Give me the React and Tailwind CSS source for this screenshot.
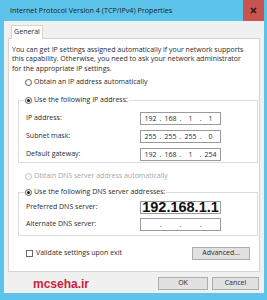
import React from "react";

function Radio({ checked, disabled }) {
  return (
    <span
      className={
        disabled
          ? "w-[7px] h-[7px] rounded-full border border-[#c4c4c4] bg-white flex items-center justify-center shrink-0"
          : "w-[7px] h-[7px] rounded-full border border-[#5e5e5e] bg-white flex items-center justify-center shrink-0"
      }
    >
      {checked && <span className="w-[3px] h-[3px] rounded-full bg-[#1a1a1a]" />}
    </span>
  );
}

function IpBox({ parts }) {
  return (
    <div className="w-[81px] h-[13px] border border-[#9a9a9a] bg-white flex items-center pl-[1px]">
      {parts.map((p, i) => (
        <React.Fragment key={i}>
          <span className="w-[17px] text-center leading-none">{p}</span>
          {i < 3 && <span className="w-[3px] text-center leading-none">.</span>}
        </React.Fragment>
      ))}
    </div>
  );
}

function Row({ label, children }) {
  return (
    <div className="flex items-center h-[13px] pl-[7px]">
      <span className="w-[114px] shrink-0">{label}</span>
      {children}
    </div>
  );
}

export default function App() {
  return (
    <div className="w-[267px] h-[300px] bg-[#5cc3ea] flex flex-col pl-[4px] pr-[3px] pb-[7px] font-['Open_Sans',sans-serif] text-[7px] text-[#2b2b2b]">
      {/* title bar */}
      <div className="h-[21px] flex items-center shrink-0">
        <span className="pl-[6px] flex-1 text-[#1b1b1b] text-[7.2px]">
          Internet Protocol Version 4 (TCP/IPv4) Properties
        </span>
        <div className="w-[21px] h-[21px] bg-[#c9534f] flex items-center justify-center">
          <svg width="7" height="7" viewBox="0 0 7 7">
            <path d="M1 1 L6 6 M6 1 L1 6" stroke="#2a1a1a" strokeWidth="1.6" />
          </svg>
        </div>
      </div>

      {/* body */}
      <div className="flex-1 bg-[#f0f0f0] flex flex-col px-[4px]">
        <div className="pt-[4px] flex pl-[3px]">
          <div className="w-[32px] h-[14px] bg-white border border-b-0 border-[#d5d5d5] -mb-px relative flex items-center justify-center">
            General
          </div>
        </div>

        <div className="h-[234px] bg-white border border-[#d5d5d5] flex flex-col">
          <p className="pl-[3px] pt-[6px] leading-[9.3px]">
            You can get IP settings assigned automatically if your network supports
            <br />
            this capability. Otherwise, you need to ask your network administrator
            <br />
            for the appropriate IP settings.
          </p>

          <div className="flex items-center gap-[2px] h-[9px] mt-[5px] pl-[16px]">
            <Radio />
            <span>Obtain an IP address automatically</span>
          </div>

          <fieldset className="border border-[#dcdcdc] ml-[9px] mr-[1px] mt-[9px] pb-[1px]">
            <legend className="ml-[6px] pr-[1px] h-[9px] flex items-center gap-[2px]">
              <Radio checked />
              <span>Use the following IP address:</span>
            </legend>
            <div className="flex flex-col gap-[5px] mt-[7px]">
              <Row label="IP address:">
                <IpBox parts={["192", "168", "1", "1"]} />
              </Row>
              <Row label="Subnet mask:">
                <IpBox parts={["255", "255", "255", "0"]} />
              </Row>
              <Row label="Default gateway:">
                <IpBox parts={["192", "168", "1", "254"]} />
              </Row>
            </div>
          </fieldset>

          <div className="flex items-center gap-[2px] h-[9px] mt-[9px] pl-[16px] text-[#a6a6a6]">
            <Radio disabled />
            <span>Obtain DNS server address automatically</span>
          </div>

          <fieldset className="border border-[#dcdcdc] ml-[9px] mr-[1px] mt-[7px] pb-[4px]">
            <legend className="ml-[6px] pr-[1px] h-[9px] flex items-center gap-[2px]">
              <Radio checked />
              <span>Use the following DNS server addresses:</span>
            </legend>
            <div className="flex flex-col gap-[4px] mt-[4px]">
              <Row label="Preferred DNS server:">
                <div className="w-[81px] h-[13px] border border-[#9a9a9a] bg-white flex items-center justify-center">
                  <span className="font-['Liberation_Sans',sans-serif] text-[14.5px] font-bold leading-none text-[#111]">
                    192.168.1.1
                  </span>
                </div>
              </Row>
              <Row label="Alternate DNS server:">
                <IpBox parts={["", "", "", ""]} />
              </Row>
            </div>
          </fieldset>

          <div className="flex items-center justify-between mt-[11px] pl-[17px] pr-[9px]">
            <div className="flex items-center gap-[3px]">
              <span className="w-[7px] h-[7px] border border-[#6a6a6a] bg-white" />
              <span>Validate settings upon exit</span>
            </div>
            <div className="w-[58px] h-[13px] bg-[#e1e1e1] border border-[#adadad] flex items-center justify-center">
              Advanced...
            </div>
          </div>
        </div>

        <div className="flex items-center justify-between pt-[5px] pl-[25px] pr-[1px]">
          <span className="font-['Liberation_Sans',sans-serif] font-bold text-[12px] leading-none text-[#cc1f3d]">
            mcseha.ir
          </span>
          <div className="flex gap-[4px]">
            <div className="w-[50px] h-[13px] bg-[#e1e1e1] border border-[#adadad] flex items-center justify-center">
              OK
            </div>
            <div className="w-[47px] h-[13px] bg-[#e1e1e1] border border-[#adadad] flex items-center justify-center">
              Cancel
            </div>
          </div>
        </div>
      </div>
    </div>
  );
}
